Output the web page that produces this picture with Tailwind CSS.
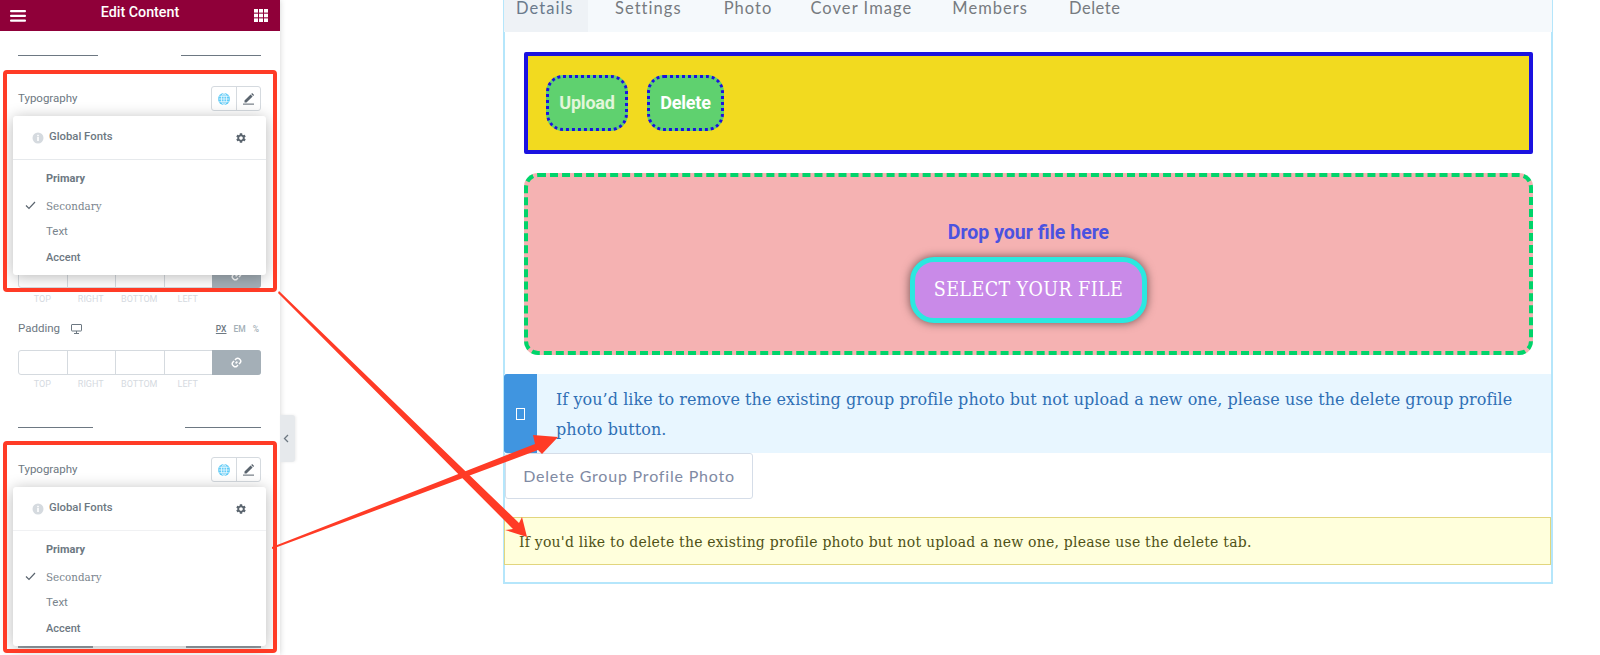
<!doctype html>
<html>
<head>
<meta charset="utf-8">
<script src="https://cdn.jsdelivr.net/npm/@tailwindcss/browser@4"></script>
</head>
<body class="bg-white">
<div class="relative flex w-[1600px] h-[655px] overflow-hidden bg-white font-['Roboto',sans-serif]">

  <!-- Sidebar -->
  <aside class="relative w-[280px] h-[655px] shrink-0 bg-white shadow-[0_0_6px_rgba(0,0,0,0.18)] flex flex-col">
    <header class="h-[31px] shrink-0 bg-[#8f0039] flex items-center justify-between pl-[10px] pr-[12px] text-white">
      <svg width="16" height="12" viewBox="0 0 16 12" fill="#fff"><rect y="0" width="16" height="2.2" rx="1"/><rect y="4.8" width="16" height="2.2" rx="1"/><rect y="9.6" width="16" height="2.2" rx="1"/></svg>
      <span class="text-[14.3px] font-medium leading-none mb-[7px]">Edit Content</span>
      <svg width="14" height="13" viewBox="0 0 14 13" fill="#fff"><rect x="0" y="0" width="4" height="3.6"/><rect x="5" y="0" width="4" height="3.6"/><rect x="10" y="0" width="4" height="3.6"/><rect x="0" y="4.7" width="4" height="3.6"/><rect x="5" y="4.7" width="4" height="3.6"/><rect x="10" y="4.7" width="4" height="3.6"/><rect x="0" y="9.4" width="4" height="3.6"/><rect x="5" y="9.4" width="4" height="3.6"/><rect x="10" y="9.4" width="4" height="3.6"/></svg>
    </header>

    <div class="pl-[18px] pr-[19px] flex flex-col">
      <div class="mt-[24px] flex justify-between">
        <div class="w-[80px] h-[1px] bg-[#6d7882]"></div>
        <div class="w-[80px] h-[1px] bg-[#6d7882]"></div>
      </div>

      <!-- Section 1 -->
      <div class="relative mt-[30px] h-[25px] flex items-center justify-between">
        <span class="text-[11.5px] text-[#6d7882]">Typography</span>
        <div class="flex w-[50px] h-[25px] border border-[#d5dadf] rounded-[3px]">
          <div class="w-[25px] flex items-center justify-center border-r border-[#d5dadf]">
            <svg width="12" height="12" viewBox="0 0 12 12" fill="none" stroke="#fff" stroke-width="0.7"><circle cx="6" cy="6" r="6" fill="#62ccf7" stroke="none"/><ellipse cx="6" cy="6" rx="2.6" ry="5.5"/><path d="M.5 6h11M1.3 3.3h9.4M1.3 8.7h9.4M6 .5v11"/></svg>
          </div>
          <div class="flex-1 flex items-center justify-center">
            <svg width="13" height="13" viewBox="0 0 13 13" fill="#5a646e"><path d="M2.5 8.6 8.6 2.5l2 2L4.5 10.6H2.5zM9.2 1.9l.9-.9 2 2-.9.9z"/><rect x="1" y="11.6" width="11" height="1"/></svg>
          </div>
        </div>
      </div>

      <div class="relative mt-[152px] flex h-[25px] border border-[#d5dadf] rounded-[3px]">
        <div class="flex-1 border-r border-[#d5dadf]"></div>
        <div class="flex-1 border-r border-[#d5dadf]"></div>
        <div class="flex-1 border-r border-[#d5dadf]"></div>
        <div class="flex-1"></div>
        <div class="w-[49px] -my-px -mr-px bg-[#a4afb7] rounded-r-[3px] flex items-center justify-center">
          <svg width="11" height="11" viewBox="0 0 11 11" fill="none" stroke="#fff" stroke-width="1.5"><path d="M4.6 6.4 6.4 4.6M4 3 5.2 1.8a2.1 2.1 0 0 1 3 0l1 1a2.1 2.1 0 0 1 0 3L8 7M7 8 5.8 9.2a2.1 2.1 0 0 1-3 0l-1-1a2.1 2.1 0 0 1 0-3L3 4"/></svg>
        </div>
      </div>
      <div class="flex w-[194px] mt-[5px] text-[9px] leading-[12px] text-[#d5dadf] text-center">
        <span class="flex-1">TOP</span><span class="flex-1">RIGHT</span><span class="flex-1">BOTTOM</span><span class="flex-1">LEFT</span>
      </div>

      <div class="mt-[15px] h-[18px] flex items-center justify-between">
        <div class="flex items-center gap-[11px]">
          <span class="text-[11.5px] text-[#6d7882]">Padding</span>
          <svg width="11" height="10" viewBox="0 0 11 10" fill="none" stroke="#6d7882"><rect x=".5" y=".5" width="10" height="6.5" rx=".5"/><path d="M3 9.5h5M5.5 7v2"/></svg>
        </div>
        <div class="flex gap-[7px] text-[8.5px] font-medium text-[#a4afb7] mr-[2px]">
          <span class="text-[#6d7882] underline">PX</span><span>EM</span><span>%</span>
        </div>
      </div>

      <div class="mt-[12px] flex h-[25px] border border-[#d5dadf] rounded-[3px]">
        <div class="flex-1 border-r border-[#d5dadf]"></div>
        <div class="flex-1 border-r border-[#d5dadf]"></div>
        <div class="flex-1 border-r border-[#d5dadf]"></div>
        <div class="flex-1"></div>
        <div class="w-[49px] -my-px -mr-px bg-[#a4afb7] rounded-r-[3px] flex items-center justify-center">
          <svg width="11" height="11" viewBox="0 0 11 11" fill="none" stroke="#fff" stroke-width="1.5"><path d="M4.6 6.4 6.4 4.6M4 3 5.2 1.8a2.1 2.1 0 0 1 3 0l1 1a2.1 2.1 0 0 1 0 3L8 7M7 8 5.8 9.2a2.1 2.1 0 0 1-3 0l-1-1a2.1 2.1 0 0 1 0-3L3 4"/></svg>
        </div>
      </div>
      <div class="flex w-[194px] mt-[3px] text-[9px] leading-[12px] text-[#d5dadf] text-center">
        <span class="flex-1">TOP</span><span class="flex-1">RIGHT</span><span class="flex-1">BOTTOM</span><span class="flex-1">LEFT</span>
      </div>

      <div class="mt-[37px] flex justify-between">
        <div class="w-[75px] h-[1px] bg-[#6d7882]"></div>
        <div class="w-[76px] h-[1px] bg-[#6d7882]"></div>
      </div>

      <!-- Section 2 -->
      <div class="mt-[29px] h-[25px] flex items-center justify-between">
        <span class="text-[11.5px] text-[#6d7882]">Typography</span>
        <div class="flex w-[50px] h-[25px] border border-[#d5dadf] rounded-[3px]">
          <div class="w-[25px] flex items-center justify-center border-r border-[#d5dadf]">
            <svg width="12" height="12" viewBox="0 0 12 12" fill="none" stroke="#fff" stroke-width="0.7"><circle cx="6" cy="6" r="6" fill="#62ccf7" stroke="none"/><ellipse cx="6" cy="6" rx="2.6" ry="5.5"/><path d="M.5 6h11M1.3 3.3h9.4M1.3 8.7h9.4M6 .5v11"/></svg>
          </div>
          <div class="flex-1 flex items-center justify-center">
            <svg width="13" height="13" viewBox="0 0 13 13" fill="#5a646e"><path d="M2.5 8.6 8.6 2.5l2 2L4.5 10.6H2.5zM9.2 1.9l.9-.9 2 2-.9.9z"/><rect x="1" y="11.6" width="11" height="1"/></svg>
          </div>
        </div>
      </div>
      <div class="mt-[164px] flex justify-between">
        <div class="w-[75px] h-[2px] bg-[#9aa2a9]"></div>
        <div class="w-[75px] h-[2px] bg-[#9aa2a9]"></div>
      </div>
    </div>

    <!-- Popover 1 -->
    <div class="absolute left-[13px] top-[116px] w-[253px] h-[159px] bg-white rounded-[3px] shadow-[0_2px_15px_rgba(0,0,0,0.28)] flex flex-col">
      <div class="h-[44px] border-b border-[#e6e9ec] flex items-center pl-[19px] pr-[19px] justify-between">
        <div class="flex items-center gap-[5px]">
          <svg width="12" height="12" viewBox="0 0 12 12"><circle cx="6" cy="6" r="5.5" fill="#d5dadf"/><rect x="5.2" y="5" width="1.6" height="4" fill="#fff"/><rect x="5.2" y="2.8" width="1.6" height="1.5" fill="#fff"/></svg>
          <span class="text-[11.3px] font-medium text-[#6d7882]">Global Fonts</span>
        </div>
        <svg width="12" height="12" viewBox="0 0 24 24" fill="#5a646e"><path d="M19.14 12.94c.04-.3.06-.61.06-.94 0-.32-.02-.64-.07-.94l2.03-1.58c.18-.14.23-.41.12-.61l-1.92-3.32c-.12-.22-.37-.29-.59-.22l-2.39.96c-.5-.38-1.03-.7-1.62-.94l-.36-2.54c-.04-.24-.24-.41-.48-.41h-3.84c-.24 0-.43.17-.47.41l-.36 2.54c-.59.24-1.13.57-1.62.94l-2.39-.96c-.22-.08-.47 0-.59.22L2.74 8.87c-.12.21-.08.47.12.61l2.03 1.58c-.05.3-.09.63-.09.94s.02.64.07.94l-2.03 1.58c-.18.14-.23.41-.12.61l1.92 3.32c.12.22.37.29.59.22l2.39-.96c.5.38 1.03.7 1.62.94l.36 2.54c.05.24.24.41.48.41h3.84c.24 0 .44-.17.47-.41l.36-2.54c.59-.24 1.13-.56 1.62-.94l2.39.96c.22.08.47 0 .59-.22l1.92-3.32c.12-.22.07-.47-.12-.61l-2.01-1.58zM12 15.6c-1.98 0-3.6-1.62-3.6-3.6s1.62-3.6 3.6-3.6 3.6 1.62 3.6 3.6-1.62 3.6-3.6 3.6z"/></svg>
      </div>
      <div class="pl-[33px] text-[#6d7882]">
        <div class="mt-[10px] h-[18px] leading-[18px] text-[11px] font-bold">Primary</div>
        <div class="relative mt-[9px] h-[18px] leading-[18px] text-[11.5px] font-['DejaVu_Serif_Condensed',serif] text-[#7a848d]">
          <svg class="absolute left-[-21px] top-[4px]" width="11" height="9" viewBox="0 0 11 9" fill="none" stroke="#5a646e" stroke-width="1.2"><path d="M1 4.5 4 7.5 10 1"/></svg>
          Secondary</div>
        <div class="mt-[7px] h-[18px] leading-[18px] text-[11.5px] text-[#7a848d]">Text</div>
        <div class="mt-[9px] h-[18px] leading-[18px] text-[11px] font-medium">Accent</div>
      </div>
    </div>

    <!-- Popover 2 -->
    <div class="absolute left-[13px] top-[487px] w-[253px] h-[159px] bg-white rounded-[3px] shadow-[0_2px_15px_rgba(0,0,0,0.28)] flex flex-col">
      <div class="h-[44px] border-b border-[#f0f1f3] flex items-center pl-[19px] pr-[19px] justify-between">
        <div class="flex items-center gap-[5px]">
          <svg width="12" height="12" viewBox="0 0 12 12"><circle cx="6" cy="6" r="5.5" fill="#d5dadf"/><rect x="5.2" y="5" width="1.6" height="4" fill="#fff"/><rect x="5.2" y="2.8" width="1.6" height="1.5" fill="#fff"/></svg>
          <span class="text-[11.3px] font-medium text-[#6d7882]">Global Fonts</span>
        </div>
        <svg width="12" height="12" viewBox="0 0 24 24" fill="#5a646e"><path d="M19.14 12.94c.04-.3.06-.61.06-.94 0-.32-.02-.64-.07-.94l2.03-1.58c.18-.14.23-.41.12-.61l-1.92-3.32c-.12-.22-.37-.29-.59-.22l-2.39.96c-.5-.38-1.03-.7-1.62-.94l-.36-2.54c-.04-.24-.24-.41-.48-.41h-3.84c-.24 0-.43.17-.47.41l-.36 2.54c-.59.24-1.13.57-1.62.94l-2.39-.96c-.22-.08-.47 0-.59.22L2.74 8.87c-.12.21-.08.47.12.61l2.03 1.58c-.05.3-.09.63-.09.94s.02.64.07.94l-2.03 1.58c-.18.14-.23.41-.12.61l1.92 3.32c.12.22.37.29.59.22l2.39-.96c.5.38 1.03.7 1.62.94l.36 2.54c.05.24.24.41.48.41h3.84c.24 0 .44-.17.47-.41l.36-2.54c.59-.24 1.13-.56 1.62-.94l2.39.96c.22.08.47 0 .59-.22l1.92-3.32c.12-.22.07-.47-.12-.61l-2.01-1.58zM12 15.6c-1.98 0-3.6-1.62-3.6-3.6s1.62-3.6 3.6-3.6 3.6 1.62 3.6 3.6-1.62 3.6-3.6 3.6z"/></svg>
      </div>
      <div class="pl-[33px] text-[#6d7882]">
        <div class="mt-[10px] h-[18px] leading-[18px] text-[11px] font-bold">Primary</div>
        <div class="relative mt-[9px] h-[18px] leading-[18px] text-[11.5px] font-['DejaVu_Serif_Condensed',serif] text-[#7a848d]">
          <svg class="absolute left-[-21px] top-[4px]" width="11" height="9" viewBox="0 0 11 9" fill="none" stroke="#5a646e" stroke-width="1.2"><path d="M1 4.5 4 7.5 10 1"/></svg>
          Secondary</div>
        <div class="mt-[7px] h-[18px] leading-[18px] text-[11.5px] text-[#7a848d]">Text</div>
        <div class="mt-[9px] h-[18px] leading-[18px] text-[11px] font-medium">Accent</div>
      </div>
    </div>

    <!-- Collapse handle -->
    <div class="absolute left-[280px] top-[415px] w-[15px] h-[47px] bg-[#e6e9ec] rounded-r-[3px] flex items-center pl-[3px] shadow-[1px_0_3px_rgba(0,0,0,0.08)]">
      <svg width="6" height="9" viewBox="0 0 6 9" fill="none" stroke="#6d7882" stroke-width="1.3"><path d="M5 1 1.5 4.5 5 8"/></svg>
    </div>
  </aside>

  <!-- Main content -->
  <main class="flex-1 pl-[223px]">
    <div class="w-[1050px] h-[584px] border-x-2 border-b-2 border-[#b5e6fb] flex flex-col">
      <nav class="h-[32px] shrink-0 bg-[#f5f9fc] flex font-['Lato',sans-serif] text-[16.5px] text-[#777b80] tracking-[1.05px] leading-[17px] -mx-px">
        <div class="w-[84px] pl-[12px] bg-[#eef2f6] text-[#6b7a8c] rounded-bl-[2px]">Details</div>
        <div class="ml-[27px]">Settings</div>
        <div class="ml-[42px]">Photo</div>
        <div class="ml-[38px]">Cover Image</div>
        <div class="ml-[40px]">Members</div>
        <div class="ml-[41px] tracking-[0.5px]">Delete</div>
      </nav>

      <div class="mt-[20px] ml-[19px] mr-[18px] h-[102px] border-4 border-[#1b12e0] rounded-[2px] bg-[#f2da1f] flex items-center pl-[18px] gap-[19px] font-bold text-[18px]">
        <div class="w-[82px] h-[56px] rounded-[17px] border-[3px] border-dotted border-[#1b12e0] bg-[#5fd16f] flex items-center justify-center pb-[1px] text-[#e2f6da] tracking-[-0.2px]">Upload</div>
        <div class="w-[77px] h-[56px] rounded-[17px] border-[3px] border-dotted border-[#1b12e0] bg-[#5fd16f] flex items-center justify-center pb-[1px] text-white tracking-[-0.2px]">Delete</div>
      </div>

      <div class="mt-[19px] ml-[19px] mr-[18px] h-[182px] rounded-[14px] border-4 border-dashed border-[#00d46a] bg-[#f5b2b2] flex flex-col items-center">
        <div class="mt-[44px] h-[24px] leading-[24px] text-[19.5px] font-bold text-[#4a52e0]">Drop your file here</div>
        <div class="mt-[12px] w-[237px] h-[66px] rounded-[24px] border-[5px] border-[#2ae8e0] bg-[#c98ae8] shadow-[0_0_10px_rgba(0,0,0,0.55)] flex items-center justify-center text-white text-[19.5px] font-['DejaVu_Serif_Condensed',serif] tracking-[0.4px] uppercase">Select your file</div>
      </div>

      <div class="mt-[19px] h-[79px] shrink-0 bg-[#e8f6ff] flex -ml-px">
        <div class="w-[33px] shrink-0 bg-[#4095e0] rounded-l-[3px] flex items-center justify-center">
          <div class="w-[9px] h-[12px] border border-white"></div>
        </div>
        <p class="pl-[19px] pr-[30px] pt-[11px] text-[16px] leading-[30px] tracking-[0.05px] text-[#2f6fb5] font-['DejaVu_Serif',serif]">If you’d like to remove the existing group profile photo but not upload a new one, please use the delete group profile photo button.</p>
      </div>

      <div class="h-[46px] w-[248px] shrink-0 border border-[#d5dde8] rounded-[3px] flex items-center justify-center font-['Lato',sans-serif] text-[16px] text-[#7f8aa3] tracking-[0.8px]">Delete Group Profile Photo</div>

      <div class="mt-[18px] h-[48px] shrink-0 -ml-px bg-[#ffffdc] border border-[#e2d67e] flex items-center pl-[14px] pt-[2px] text-[14px] tracking-[0.22px] text-[#4f5216] font-['DejaVu_Serif',serif]">If you'd like to delete the existing profile photo but not upload a new one, please use the delete tab.</div>
    </div>
  </main>

  <!-- Annotations -->
  <div class="absolute left-[3px] top-[70px] w-[274px] h-[222px] border-4 border-[#ff3b26] rounded-[4px]"></div>
  <div class="absolute left-[3px] top-[441px] w-[274px] h-[212px] border-4 border-[#ff3b26] rounded-[4px]"></div>
  <svg class="absolute left-0 top-0 pointer-events-none" width="1600" height="655" viewBox="0 0 1600 655" fill="#ff3b26">
    <polygon points="278,293 279,291 519,523 522,517 527,537 505,530 513,529"/>
    <polygon points="272,549 272,547 535,444 533,435 558,437 542,454 538,450"/>
  </svg>
</div>
</body>
</html>
